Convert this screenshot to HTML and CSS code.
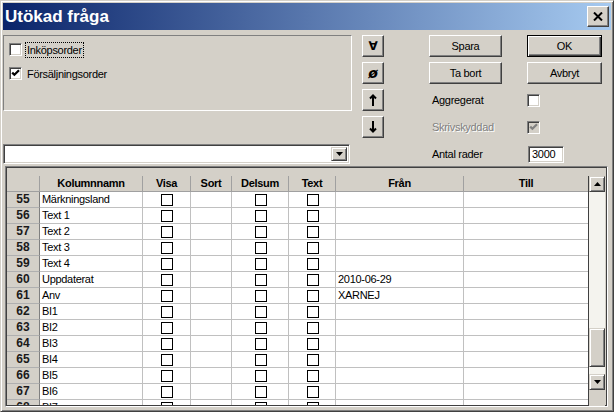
FILE: index.html
```html
<!DOCTYPE html>
<html>
<head>
<meta charset="utf-8">
<title>Utökad fråga</title>
<link rel="stylesheet" href="styles.css">
</head>
<body>
<div class="window">
    <div class="titlebar">
        <span class="title">Utökad fråga</span>
        <button class="btn-close">
            <svg width="10" height="9" viewBox="0 0 10 9"><path d="M1 0.5 L9 8.5 M9 0.5 L1 8.5" stroke="#000" stroke-width="2"/></svg>
        </button>
    </div>

    <div class="client">
        <div class="top">
            <div class="left-col">
                <div class="order-box">
                    <div class="check-row"><span class="chk"></span><span class="focus">Inköpsorder</span></div>
                    <div class="check-row"><span class="chk"><svg width="9" height="9" viewBox="0 0 9 9"><path d="M1.2 3.6 L3.4 5.8 L8 1.2" stroke="#000" stroke-width="2.2" fill="none"/></svg></span><span>Försäljningsorder</span></div>
                </div>
                <div class="combo">
                    <span class="combo-btn"><svg width="7" height="4" viewBox="0 0 7 4"><path d="M0 0 H7 L3.5 4 Z" fill="#000"/></svg></span>
                </div>
            </div>

            <div class="tool-col">
                <button class="tool sym">∀</button>
                <button class="tool sym slash">ø</button>
                <button class="tool"><svg width="8" height="12" viewBox="0 0 8 12"><path d="M4 1.5 V12 M1 4.5 L4 1.5 L7 4.5" stroke="#000" stroke-width="2" fill="none"/></svg></button>
                <button class="tool"><svg width="8" height="12" viewBox="0 0 8 12"><path d="M4 0 V10.5 M1 7.5 L4 10.5 L7 7.5" stroke="#000" stroke-width="2" fill="none"/></svg></button>
            </div>

            <div class="action-panel">
                <button class="btn">Spara</button>
                <button class="btn default">OK</button>
                <button class="btn">Ta bort</button>
                <button class="btn">Avbryt</button>
                <span class="lbl">Aggregerat</span>
                <span class="cell-chk"><span class="chk"></span></span>
                <span class="lbl disabled">Skrivskyddad</span>
                <span class="cell-chk"><span class="chk off"><svg width="9" height="9" viewBox="0 0 9 9"><path d="M1.2 3.6 L3.4 5.8 L8 1.2" stroke="#808080" stroke-width="2.2" fill="none"/></svg></span></span>
                <span class="lbl">Antal rader</span>
                <span class="cell-chk"><span class="num">3000</span></span>
            </div>
        </div>

        <div class="grid-frame">
            <div class="grid">
                <div class="row head">
                    <div class="rh"></div>
                    <div>Kolumnnamn</div>
                    <div>Visa</div>
                    <div>Sort</div>
                    <div>Delsum</div>
                    <div>Text</div>
                    <div>Från</div>
                    <div>Till</div>
                </div>
                <div class="rows" id="rows"></div>
            </div>
            <div class="vscroll">
                <div class="sb-btn"><svg width="7" height="4" viewBox="0 0 7 4"><path d="M0 4 H7 L3.5 0 Z" fill="#000"/></svg></div>
                <div class="sb-track upper"></div>
                <div class="sb-thumb"></div>
                <div class="sb-track lower"></div>
                <div class="sb-btn"><svg width="7" height="4" viewBox="0 0 7 4"><path d="M0 0 H7 L3.5 4 Z" fill="#000"/></svg></div>
                <div class="sb-rest"></div>
            </div>
        </div>
    </div>
</div>

<script>
    var data = [
        [55, 'Märkningsland', ''],
        [56, 'Text 1', ''],
        [57, 'Text 2', ''],
        [58, 'Text 3', ''],
        [59, 'Text 4', ''],
        [60, 'Uppdaterat', '2010-06-29'],
        [61, 'Anv', 'XARNEJ'],
        [62, 'BI1', ''],
        [63, 'BI2', ''],
        [64, 'BI3', ''],
        [65, 'BI4', ''],
        [66, 'BI5', ''],
        [67, 'BI6', ''],
        [68, 'BI7', '']
    ];
    var html = '';
    data.forEach(function (r) {
        html += '<div class="row">' +
            '<div class="rh">' + r[0] + '</div>' +
            '<div class="name">' + r[1] + '</div>' +
            '<div class="c"><span class="box"></span></div>' +
            '<div></div>' +
            '<div class="c"><span class="box"></span></div>' +
            '<div class="c"><span class="box"></span></div>' +
            '<div class="name">' + r[2] + '</div>' +
            '<div></div>' +
            '</div>';
    });
    document.getElementById('rows').innerHTML = html;
</script>
</body>
</html>
```

FILE: styles.css
```css
body {
    margin: 0px;
    padding: 0px;
    background: #d4d0c8;
}

.window {
    width: 614px;
    height: 412px;
    box-sizing: border-box;
    overflow: hidden;
    background: #d4d0c8;
    border: 1px solid;
    border-color: #d4d0c8 #404040 #404040 #d4d0c8;
    box-shadow: inset 1px 1px #fff, inset -1px -1px #808080;
    padding: 2px;
    font-family: "Liberation Sans", Arial, sans-serif;
    font-size: 11px;
    letter-spacing: -0.3px;
    color: #000;
}

/* title bar */
.titlebar {
    height: 27px;
    display: flex;
    align-items: center;
    justify-content: space-between;
    background: linear-gradient(to right, #0a246a, #a6caf0);
}

.title {
    padding-left: 2px;
    color: #fff;
    font-size: 17px;
    font-weight: bold;
    letter-spacing: 0px;
}

.btn-close {
    width: 22px;
    height: 21px;
    margin-right: 2px;
    padding: 0px;
    display: flex;
    align-items: center;
    justify-content: center;
    background: #d4d0c8;
    border: 1px solid;
    border-color: #fff #404040 #404040 #fff;
    box-shadow: inset -1px -1px #808080;
}

.client {
    padding-top: 5px;
}

.top {
    display: flex;
    height: 129px;
}

.left-col {
    width: 349px;
    display: flex;
    flex-direction: column;
    justify-content: space-between;
}

.order-box {
    height: 76px;
    box-sizing: border-box;
    border: 1px solid;
    border-color: #808080 #fff #fff #808080;
    padding: 7px 5px;
    display: flex;
    flex-direction: column;
    gap: 11px;
}

.check-row {
    display: flex;
    align-items: center;
    gap: 5px;
    height: 13px;
}

.focus {
    outline: 1px dotted #000;
    outline-offset: 0px;
    padding: 1px;
    margin-left: -1px;
}

/* classic checkbox */
.chk {
    width: 13px;
    height: 13px;
    box-sizing: border-box;
    display: inline-flex;
    align-items: center;
    justify-content: center;
    background: #fff;
    border: 1px solid;
    border-color: #808080 #fff #fff #808080;
    box-shadow: inset 1px 1px #404040, inset -1px -1px #d4d0c8;
    flex: none;
}

.chk.off {
    background: #d4d0c8;
}

.combo {
    width: 347px;
    height: 20px;
    box-sizing: border-box;
    background: #fff;
    border: 1px solid;
    border-color: #808080 #fff #fff #808080;
    box-shadow: inset 1px 1px #404040, inset -1px -1px #d4d0c8;
    display: flex;
    justify-content: flex-end;
    padding: 2px;
}

.combo-btn {
    width: 16px;
    box-sizing: border-box;
    display: flex;
    align-items: center;
    justify-content: center;
    background: #d4d0c8;
    border: 1px solid;
    border-color: #d4d0c8 #404040 #404040 #d4d0c8;
    box-shadow: inset 1px 1px #fff, inset -1px -1px #808080;
}

/* raised buttons */
button {
    font-family: inherit;
    font-size: 11px;
    letter-spacing: -0.3px;
    color: #000;
}

.tool-col {
    margin-left: 10px;
    width: 22px;
    display: flex;
    flex-direction: column;
    gap: 5px;
}

.tool, .btn {
    height: 22px;
    padding: 0px;
    background: #d4d0c8;
    border: 1px solid;
    border-color: #fff #404040 #404040 #fff;
    box-shadow: inset -1px -1px #808080;
    display: flex;
    align-items: center;
    justify-content: center;
}

.sym {
    font-family: "DejaVu Sans", sans-serif;
    font-weight: bold;
    font-size: 12px;
}

.slash {
    font-size: 14px;
    font-style: italic;
}

.action-panel {
    margin-left: 45px;
    display: grid;
    grid-template-columns: 73px 75px;
    grid-template-rows: repeat(5, 22px);
    column-gap: 25px;
    row-gap: 5px;
    align-content: start;
}

.btn.default {
    border: 1px solid #000;
    box-shadow: inset 1px 1px #fff, inset -1px -1px #404040, inset -2px -2px #808080;
}

.lbl {
    display: flex;
    align-items: center;
    padding-left: 3px;
}

.lbl.disabled {
    color: #808080;
    text-shadow: 1px 1px #fff;
}

.cell-chk {
    display: flex;
    align-items: center;
}

.num {
    width: 36px;
    height: 17px;
    box-sizing: border-box;
    background: #fff;
    border: 1px solid;
    border-color: #808080 #fff #fff #808080;
    box-shadow: inset 1px 1px #404040, inset -1px -1px #d4d0c8;
    padding: 1px 0px 0px 3px;
    margin-left: 1px;
}

/* data grid */
.grid-frame {
    margin: 2px 3px 0px 2px;
    height: 241px;
    box-sizing: border-box;
    border: 1px solid;
    border-color: #808080 #fff #fff #808080;
    box-shadow: inset 1px 1px #404040, inset -1px -1px #404040;
    padding: 9px 1px 0px 1px;
    display: flex;
}

.grid {
    width: 582px;
    border-right: 1px solid #404040;
    box-sizing: border-box;
    overflow: hidden;
    height: 229px;
}

.row {
    display: grid;
    grid-template-columns: 33px 103px 48px 41px 57px 47px 128px 124px;
    height: 16px;
    background: #fff;
}

.row > div {
    box-sizing: border-box;
    border-right: 1px solid #c0c0c0;
    border-bottom: 1px solid #c0c0c0;
    white-space: nowrap;
    overflow: hidden;
    line-height: 15px;
}

.row > div:last-child {
    border-right: none;
}

.row.head > div {
    background: #d4d0c8;
    font-weight: bold;
    text-align: center;
    border-right-color: #a0a0a0;
    border-bottom-color: #a0a0a0;
}

.row .rh {
    background: #d4d0c8;
    font-size: 12px;
    font-weight: bold;
    text-align: center;
    color: #1a1a1a;
    letter-spacing: 0px;
    border-right-color: #808080;
    border-bottom-color: #b0b0b0;
}

.row .name {
    padding-left: 2px;
}

.row .c {
    display: flex;
    align-items: center;
    justify-content: center;
}

.box {
    width: 12px;
    height: 12px;
    box-sizing: border-box;
    border: 1px solid #000;
    background: #fff;
    margin-left: 1px;
}

/* scrollbar */
.vscroll {
    width: 16px;
    display: flex;
    flex-direction: column;
    background: #d4d0c8;
}

.sb-btn, .sb-thumb {
    box-sizing: border-box;
    background: #d4d0c8;
    border: 1px solid;
    border-color: #d4d0c8 #404040 #404040 #d4d0c8;
    box-shadow: inset 1px 1px #fff, inset -1px -1px #808080;
}

.sb-btn {
    height: 16px;
    display: flex;
    align-items: center;
    justify-content: center;
}

.sb-track {
    background: #f4f3ee;
}

.sb-track.upper {
    height: 136px;
}

.sb-track.lower {
    height: 7px;
}

.sb-thumb {
    height: 39px;
}

.sb-rest {
    flex: 1;
}
```
